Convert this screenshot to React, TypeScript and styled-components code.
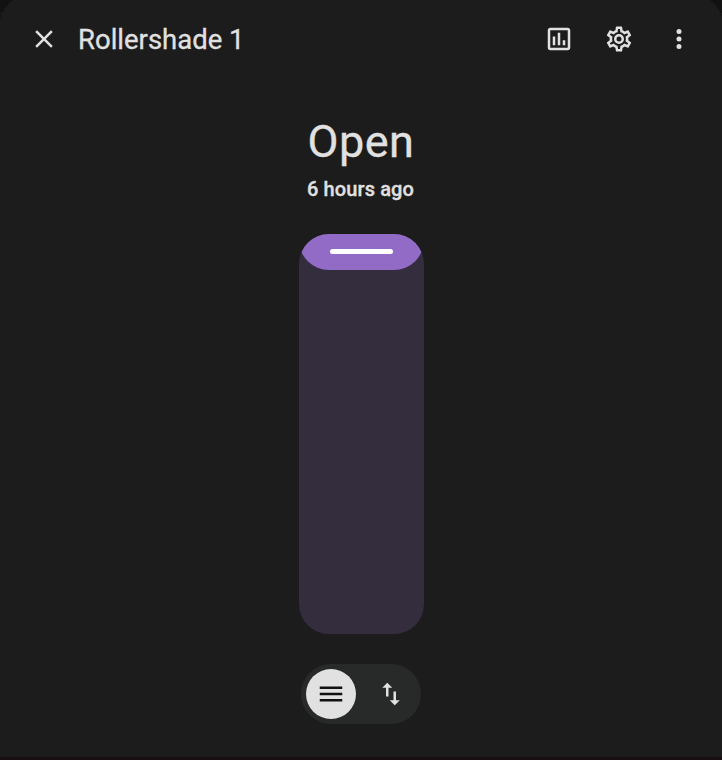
import React from "react";
import styled, { createGlobalStyle } from "styled-components";

const GlobalStyle = createGlobalStyle`
  * { box-sizing: border-box; }
  html, body { margin: 0; height: 100%; overflow: hidden; }
  body { background: #121212; font-family: Roboto, sans-serif; color: #e1e1e1; }
`;

const Viewport = styled.div`
  width: 722px;
  height: 760px;
  overflow: hidden;
  background: linear-gradient(#121212 13px, #1d1d1d 13px, #1d1d1d 14px, #121212 14px);
`;

const Dialog = styled.section`
  width: 725px;
  height: 767px;
  margin: -7px 0 0 -1px;
  padding-top: 7px;
  border-radius: 35px 35px 0 0;
  border-bottom: 3px solid #180f14;
  background: #1c1c1c;
  display: flex;
  flex-direction: column;
`;

const Header = styled.header`
  height: 78px;
  padding: 0 30px;
  display: flex;
  align-items: center;
`;

const Title = styled.h1`
  flex: 1;
  margin: 0 0 0 19px;
  font-size: 27.5px;
  line-height: 35px;
  font-weight: 400;
  -webkit-text-stroke: 0.3px currentColor;
`;

const IconButton = styled.button`
  width: 30px;
  height: 30px;
  padding: 0;
  border: 0;
  background: none;
  color: inherit;
  display: grid;
  place-items: center;
`;

const Actions = styled.nav`
  display: flex;
  gap: 30px;
`;

const Content = styled.main`
  width: 723px;
  margin-left: 1px;
  display: flex;
  flex-direction: column;
  align-items: center;
  padding-top: 39px;
`;

const State = styled.p`
  margin: 0;
  padding-right: 1px;
  font-size: 45px;
  line-height: 50px;
  letter-spacing: 0.5px;
  -webkit-text-stroke: 0.3px currentColor;
`;

const Changed = styled.p`
  margin: 10px 0 0;
  padding-right: 2px;
  font-size: 20px;
  line-height: 25px;
  font-weight: 500;
  letter-spacing: 0.125px;
  -webkit-text-stroke: 0.3px currentColor;
`;

const Slider = styled.div`
  width: 125px;
  height: 400px;
  margin-top: 32px;
  border-radius: 30px;
  overflow: hidden;
  background: #342d3e;
`;

const Shade = styled.div`
  height: 400px;
  margin-top: -363.6px;
  padding-bottom: 16px;
  border-radius: 30px;
  background: #926bc7;
  display: flex;
  align-items: flex-end;
  justify-content: center;
`;

const Handle = styled.div`
  width: 63px;
  height: 5px;
  border-radius: 2.5px;
  background: #fff;
`;

const Modes = styled.div`
  width: 120px;
  height: 60px;
  margin: 30px 2px 0 0;
  padding: 5px;
  border-radius: 30px;
  background: #282a29;
  display: flex;
  justify-content: space-between;
`;

const ModeButton = styled.button<{ $active?: boolean }>`
  width: 50px;
  height: 50px;
  padding: 0;
  border: 0;
  border-radius: 50%;
  background: ${(p) => (p.$active ? "#e1e1e1" : "transparent")};
  color: ${(p) => (p.$active ? "#111" : "#e1e1e1")};
  display: grid;
  place-items: center;
`;

const Svg = styled.svg`
  display: block;
  width: 30px;
  height: 30px;
  fill: currentColor;
`;

const icons = {
  close:
    "M19,6.41L17.59,5L12,10.59L6.41,5L5,6.41L10.59,12L5,17.59L6.41,19L12,13.41L17.59,19L19,17.59L13.41,12L19,6.41Z",
  chart:
    "M9 17H7V10H9V17M13 17H11V7H13V17M17 17H15V13H17V17M19 19H5V5H19V19M19 3H5C3.9 3 3 3.9 3 5V19C3 20.1 3.9 21 5 21H19C20.1 21 21 20.1 21 19V5C21 3.9 20.1 3 19 3Z",
  cog: "M12,8A4,4 0 0,1 16,12A4,4 0 0,1 12,16A4,4 0 0,1 8,12A4,4 0 0,1 12,8M12,10A2,2 0 0,0 10,12A2,2 0 0,0 12,14A2,2 0 0,0 14,12A2,2 0 0,0 12,10M10,22C9.75,22 9.54,21.82 9.5,21.58L9.13,18.93C8.5,18.68 7.96,18.34 7.44,17.94L4.95,18.95C4.73,19.03 4.46,18.95 4.34,18.73L2.34,15.27C2.21,15.05 2.27,14.78 2.46,14.63L4.57,12.97L4.5,12L4.57,11L2.46,9.37C2.27,9.22 2.21,8.95 2.34,8.73L4.34,5.27C4.46,5.05 4.73,4.96 4.95,5.05L7.44,6.05C7.96,5.66 8.5,5.32 9.13,5.07L9.5,2.42C9.54,2.18 9.75,2 10,2H14C14.25,2 14.46,2.18 14.5,2.42L14.87,5.07C15.5,5.32 16.04,5.66 16.56,6.05L19.05,5.05C19.27,4.96 19.54,5.05 19.66,5.27L21.66,8.73C21.79,8.95 21.73,9.22 21.54,9.37L19.43,11L19.5,12L19.43,13L21.54,14.63C21.73,14.78 21.79,15.05 21.66,15.27L19.66,18.73C19.54,18.95 19.27,19.04 19.05,18.95L16.56,17.95C16.04,18.34 15.5,18.68 14.87,18.93L14.5,21.58C14.46,21.82 14.25,22 14,22H10M11.25,4L10.88,6.61C9.68,6.86 8.62,7.5 7.85,8.39L5.44,7.35L4.69,8.65L6.8,10.2C6.4,11.37 6.4,12.64 6.8,13.8L4.68,15.36L5.43,16.66L7.86,15.62C8.63,16.5 9.68,17.14 10.87,17.38L11.24,20H12.76L13.13,17.39C14.32,17.14 15.37,16.5 16.14,15.62L18.57,16.66L19.32,15.36L17.2,13.81C17.6,12.64 17.6,11.37 17.2,10.2L19.31,8.65L18.56,7.35L16.15,8.39C15.38,7.5 14.32,6.86 13.12,6.62L12.75,4H11.25Z",
  dots: "M12,16A2,2 0 0,1 14,18A2,2 0 0,1 12,20A2,2 0 0,1 10,18A2,2 0 0,1 12,16M12,10A2,2 0 0,1 14,12A2,2 0 0,1 12,14A2,2 0 0,1 10,12A2,2 0 0,1 12,10M12,4A2,2 0 0,1 14,6A2,2 0 0,1 12,8A2,2 0 0,1 10,6A2,2 0 0,1 12,4Z",
  menu: "M3,6H21V8H3V6M3,11H21V13H3V11M3,16H21V18H3V16Z",
  swap: "M9,3L5,7H8V14H10V7H13M16,17V10H14V17H11L15,21L19,17H16Z",
};

const Icon = ({ name }: { name: keyof typeof icons }) => (
  <Svg viewBox="0 0 24 24" aria-hidden="true">
    <path d={icons[name]} />
  </Svg>
);

export default function App() {
  return (
    <>
      <GlobalStyle />
      <Viewport>
        <Dialog>
          <Header>
            <IconButton aria-label="Close"><Icon name="close" /></IconButton>
            <Title>Rollershade 1</Title>
            <Actions>
              <IconButton aria-label="History"><Icon name="chart" /></IconButton>
              <IconButton aria-label="Settings"><Icon name="cog" /></IconButton>
              <IconButton aria-label="More"><Icon name="dots" /></IconButton>
            </Actions>
          </Header>
          <Content>
            <State>Open</State>
            <Changed>6 hours ago</Changed>
            <Slider><Shade><Handle /></Shade></Slider>
            <Modes>
              <ModeButton $active aria-label="Position"><Icon name="menu" /></ModeButton>
              <ModeButton aria-label="Buttons"><Icon name="swap" /></ModeButton>
            </Modes>
          </Content>
        </Dialog>
      </Viewport>
    </>
  );
}
